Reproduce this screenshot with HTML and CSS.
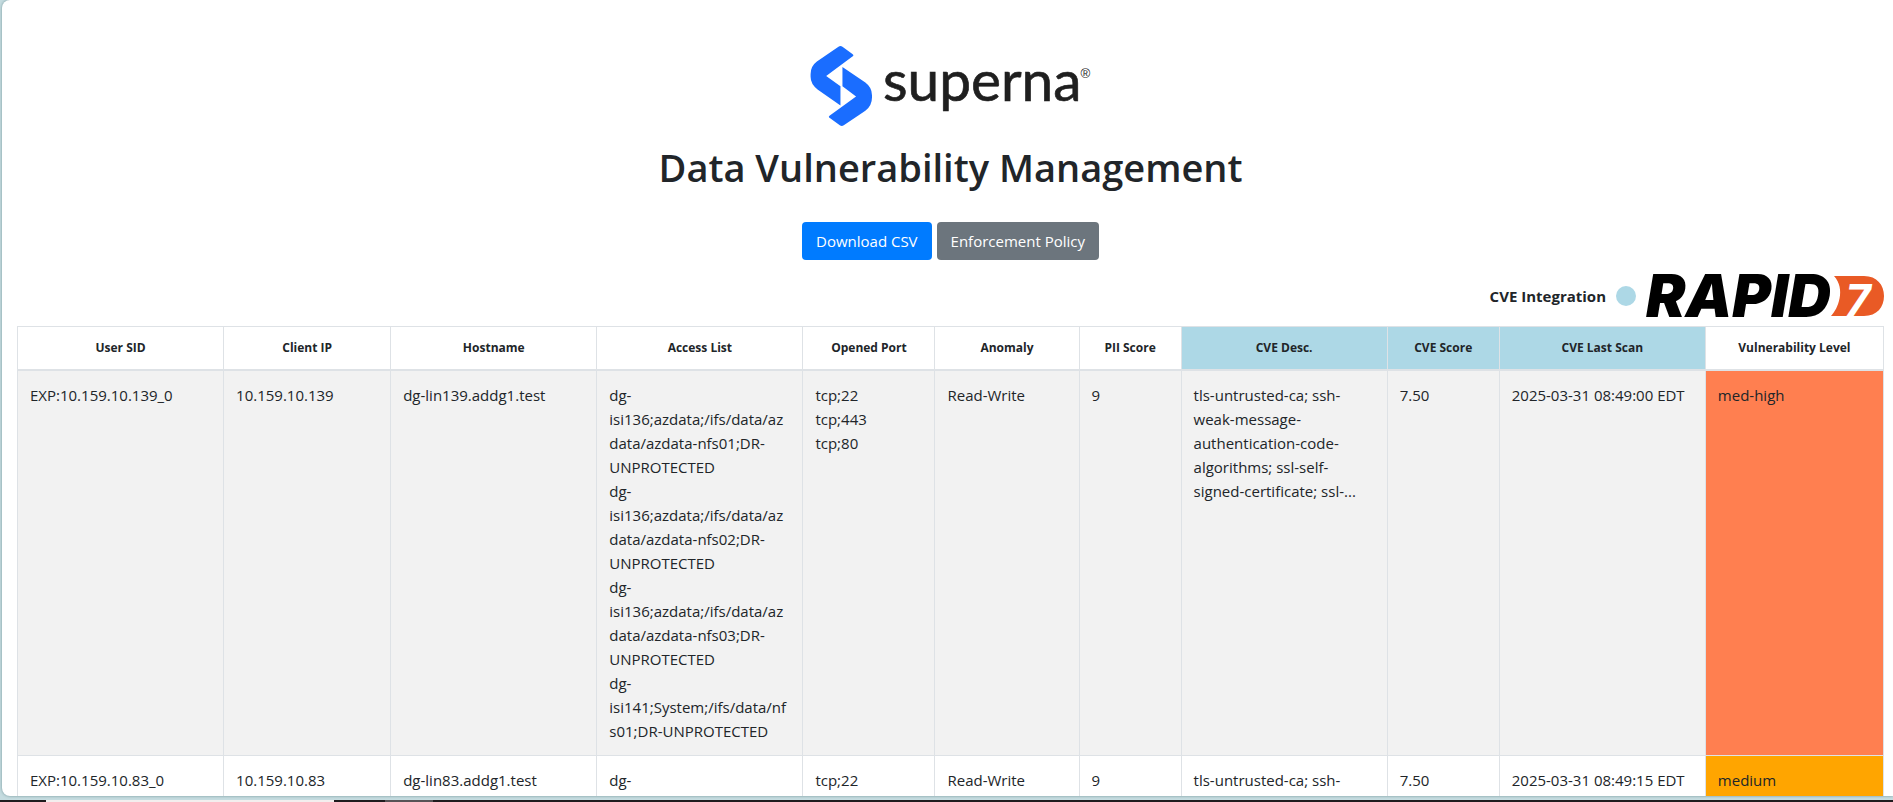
FILE: index.html
```
<!DOCTYPE html>
<html lang="en">

<head>
    <title>Data Vulnerability Management</title>
    <meta charset="UTF-8">
    <meta name="viewport" content="width=device-width, initial-scale=1">
    <link rel="stylesheet" href="styles.css">
</head>

<body>
    <main class="panel">
        <header class="header">
            <svg class="logo" viewBox="63 47 843 241" role="img" aria-label="superna">
                <path fill="#1a6dff" d="M147 49Q153 45 159 49L189 71Q195 75 189 79L110 137L153 168V226L84 178Q63 162 63 140V132Q63 108 82 94Z" />
                <path fill="#1a6dff" d="M159 110L228 157Q248 172 248 195V202Q248 227 228 242L163 286Q157 290 151 286L121 264Q115 260 121 256L200 199L159 168Z" />
                <text class="logo-name" x="281" y="214">superna</text>
                <text class="logo-reg" x="876" y="142">®</text>
            </svg>
            <h1>Data Vulnerability Management</h1>
            <div class="buttons">
                <button class="btn btn-primary" type="button">Download CSV</button>
                <button class="btn btn-secondary" type="button">Enforcement Policy</button>
            </div>
        </header>

        <div class="integration">
            <span>CVE Integration</span>
            <span class="dot"></span>
            <svg class="rapid" viewBox="0 -2 238 44" role="img" aria-label="RAPID7">
                <text class="rapid-name" x="0" y="41">RAPID</text>
                <path fill="#e95a25" d="M188 0H218C231 0 238 9 238 20C238 31 231 40 218 40H185C192 33 200 13 188 0Z" />
                <text class="rapid-seven" x="199" y="40">7</text>
            </svg>
        </div>

        <table class="table">
            <colgroup>
                <col class="w-sid">
                <col class="w-ip">
                <col class="w-host">
                <col class="w-access">
                <col class="w-port">
                <col class="w-anomaly">
                <col class="w-pii">
                <col class="w-desc">
                <col class="w-score">
                <col class="w-scan">
                <col class="w-level">
            </colgroup>
            <thead>
                <tr>
                    <th>User SID</th>
                    <th>Client IP</th>
                    <th>Hostname</th>
                    <th>Access List</th>
                    <th>Opened Port</th>
                    <th>Anomaly</th>
                    <th>PII Score</th>
                    <th class="cve">CVE Desc.</th>
                    <th class="cve">CVE Score</th>
                    <th class="cve">CVE Last Scan</th>
                    <th>Vulnerability Level</th>
                </tr>
            </thead>
            <tbody>
                <tr>
                    <td>EXP:10.159.10.139_0</td>
                    <td>10.159.10.139</td>
                    <td>dg-lin139.addg1.test</td>
                    <td>dg-<br>isi136;azdata;/ifs/data/az<br>data/azdata-nfs01;DR-<br>UNPROTECTED<br>
                        dg-<br>isi136;azdata;/ifs/data/az<br>data/azdata-nfs02;DR-<br>UNPROTECTED<br>
                        dg-<br>isi136;azdata;/ifs/data/az<br>data/azdata-nfs03;DR-<br>UNPROTECTED<br>
                        dg-<br>isi141;System;/ifs/data/nf<br>s01;DR-UNPROTECTED</td>
                    <td>tcp;22<br>tcp;443<br>tcp;80</td>
                    <td>Read-Write</td>
                    <td>9</td>
                    <td>tls-untrusted-ca; ssh-<br>weak-message-<br>authentication-code-<br>algorithms; ssl-self-<br>signed-certificate; ssl-...</td>
                    <td>7.50</td>
                    <td>2025-03-31 08:49:00 EDT</td>
                    <td class="med-high">med-high</td>
                </tr>
                <tr>
                    <td>EXP:10.159.10.83_0</td>
                    <td>10.159.10.83</td>
                    <td>dg-lin83.addg1.test</td>
                    <td>dg-</td>
                    <td>tcp;22</td>
                    <td>Read-Write</td>
                    <td>9</td>
                    <td>tls-untrusted-ca; ssh-</td>
                    <td>7.50</td>
                    <td>2025-03-31 08:49:15 EDT</td>
                    <td class="medium">medium</td>
                </tr>
            </tbody>
        </table>
    </main>
    <div class="taskbar">
        <span class="task-open"></span>
        <span class="task-idle"></span>
    </div>
</body>

</html>
```

FILE: styles.css
```
* {
    box-sizing: border-box;
}

body {
    display: flex;
    flex-direction: column;
    height: 100vh;
    margin: 0;
    overflow: hidden;
    background: #c5dce0;
    color: #212529;
    font-family: "Open Sans", "Noto Sans", sans-serif;
    font-size: 15px;
    line-height: 24px;
}

.panel {
    flex: 1;
    min-height: 0;
    overflow: hidden;
    margin-left: 2px;
    padding: 46px 9px 0 15px;
    background: #fff;
    border-radius: 8px 0 0 8px;
    box-shadow: 0 0 3px rgba(60, 100, 105, 0.6);
}

.header {
    display: flex;
    flex-direction: column;
    align-items: center;
}

.logo {
    width: 281px;
    height: 80px;
    overflow: visible;
}

.logo-name {
    fill: #1f1f1f;
    stroke: #1f1f1f;
    stroke-width: 2px;
    font-family: Lato, sans-serif;
    font-size: 171px;
}

.logo-reg {
    fill: #1f1f1f;
    font-family: "Liberation Sans", sans-serif;
    font-size: 40px;
}

h1 {
    margin: 17px 0 31px;
    font-size: 38px;
    font-weight: 600;
    line-height: 48px;
}

.buttons {
    display: flex;
    gap: 5px;
}

.btn {
    height: 38px;
    padding: 0 14px;
    border: 0;
    border-radius: 4px;
    color: #fff;
    font: inherit;
    cursor: pointer;
}

.btn-primary {
    background: #007bff;
}

.btn-secondary {
    background: #6c757d;
}

.integration {
    display: flex;
    justify-content: flex-end;
    align-items: center;
    gap: 10px;
    margin: 14px 0 8px;
    font-weight: 700;
}

.dot {
    width: 20px;
    height: 20px;
    border-radius: 50%;
    background: #add8e6;
}

.rapid {
    width: 238px;
    height: 44px;
    overflow: visible;
}

.rapid-name {
    font-family: Inter, sans-serif;
    font-size: 59px;
    font-style: italic;
    font-weight: 900;
}

.rapid-seven {
    fill: #fff;
    font-family: Inter, sans-serif;
    font-size: 44px;
    font-style: italic;
    font-weight: 700;
}

.table {
    width: 100%;
    table-layout: fixed;
    border-collapse: collapse;
}

.table th,
.table td {
    padding: 12px;
    border: 1px solid #dee2e6;
    text-align: left;
    vertical-align: top;
    white-space: nowrap;
}

.table thead th {
    border-bottom-width: 2px;
    font-size: 12px;
    line-height: 18px;
    text-align: center;
}

.table tbody tr:nth-child(odd) {
    background: #f2f2f2;
}

.table .cve {
    background: #add8e6;
}

.table .med-high {
    background: #ff7f50;
}

.table .medium {
    background: #ffa500;
}

.w-sid,
.w-host,
.w-access,
.w-desc,
.w-scan {
    width: 206px;
}

.w-ip {
    width: 167px;
}

.w-port {
    width: 132px;
}

.w-anomaly {
    width: 144px;
}

.w-pii {
    width: 102px;
}

.w-score {
    width: 112px;
}

.w-level {
    width: 178px;
}

.taskbar {
    display: flex;
    gap: 51px;
    height: 2px;
    margin-top: 4px;
    padding-left: 46px;
    background: #1f1b1e;
}

.task-open {
    width: 288px;
    background: #f3eeee;
}

.task-idle {
    width: 48px;
    background: #575356;
}
```
